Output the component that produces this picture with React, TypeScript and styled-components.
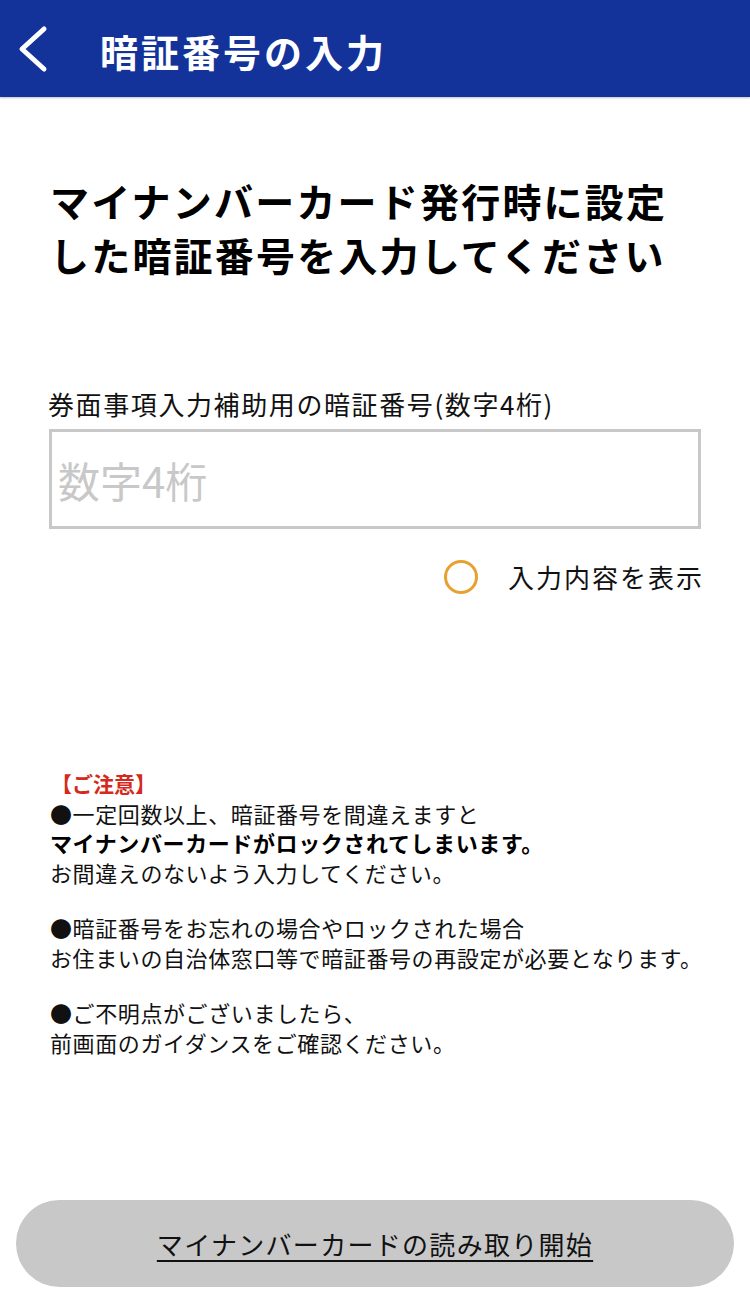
import * as React from 'react';
import styled, { createGlobalStyle } from 'styled-components';

const GlobalStyle = createGlobalStyle`
  html, body {
    margin: 0;
    padding: 0;
    background: #fff;
  }
  body {
    font-family: "Noto Sans CJK JP", "Noto Sans", sans-serif;
    color: #111;
  }
`;

const Screen = styled.div`
  width: 750px;
  min-height: 1303px;
  display: flex;
  flex-direction: column;
`;

const Header = styled.header`
  height: 97px;
  background: #13339a;
  display: flex;
  align-items: center;
  box-shadow: 0 1px 2px rgba(0, 0, 0, 0.25);
`;

const BackButton = styled.button`
  width: 70px;
  height: 97px;
  padding: 0 0 0 16px;
  border: none;
  background: none;
  display: flex;
  align-items: center;
`;

const Title = styled.h1`
  margin: 4px 0 0 30px;
  font-size: 38px;
  font-weight: 700;
  letter-spacing: 3px;
  color: #fff;
`;

const Body = styled.main`
  flex: 1;
  padding: 0 40px 0 50px;
  display: flex;
  flex-direction: column;
`;

const Heading = styled.h2`
  margin: 76px 0 0;
  font-size: 39px;
  font-weight: 700;
  line-height: 54px;
  letter-spacing: 2.2px;
  color: #000;
`;

const FieldLabel = styled.label`
  display: block;
  margin-top: 106px;
  font-size: 26px;
  line-height: 34px;
  letter-spacing: 1.6px;
  color: #111;
  margin-left: -2px;
`;

const PinInput = styled.input`
  box-sizing: border-box;
  width: 652px;
  height: 100px;
  margin: 8px 0 0 -1px;
  padding: 0 6px;
  border: 3px solid #c8c8c8;
  font-family: inherit;
  font-size: 42px;
  color: #111;
  outline: none;
  &::placeholder {
    color: #c8c8c8;
  }
`;

const ToggleRow = styled.div`
  display: flex;
  justify-content: flex-end;
  align-items: center;
  gap: 30px;
  width: 652px;
  margin-top: 29px;
`;

const Radio = styled.span`
  box-sizing: border-box;
  width: 34px;
  height: 34px;
  border: 3.5px solid #e8a030;
  border-radius: 50%;
`;

const ToggleLabel = styled.span`
  font-size: 26px;
  letter-spacing: 2px;
  margin-right: -2px;
  color: #111;
`;

const Notice = styled.section`
  margin-top: 174px;
  font-size: 22px;
  line-height: 29.5px;
  letter-spacing: 0.6px;
  white-space: nowrap;
  color: #111;
`;

const NoticeTitle = styled.div`
  color: #d42a1e;
  font-weight: 700;
  font-size: 21px;
  letter-spacing: 0;
  margin-left: 1px;
`;

const Strong = styled.div`
  font-weight: 700;
  color: #000;
`;

const Spacer = styled.div`
  height: 26px;
`;

const Footer = styled.footer`
  padding: 0 16px 16px;
  margin-top: auto;
`;

const StartButton = styled.button`
  width: 100%;
  height: 87px;
  border: none;
  border-radius: 44px;
  background: #c8c8c8;
  font-family: inherit;
  font-size: 26px;
  letter-spacing: 1.3px;
  color: #111;
  text-decoration: underline;
  text-underline-offset: 5px;
  text-decoration-thickness: 2px;
`;

const BackIcon = () => (
  <svg width="36" height="50" viewBox="0 0 36 50">
    <path
      d="M28 5 L6 25 L28 45"
      fill="none"
      stroke="#fff"
      strokeWidth="5"
      strokeLinecap="round"
      strokeLinejoin="round"
    />
  </svg>
);

const App: React.FC = () => {
  return (
    <Screen>
      <GlobalStyle />
      <Header>
        <BackButton aria-label="戻る">
          <BackIcon />
        </BackButton>
        <Title>暗証番号の入力</Title>
      </Header>
      <Body>
        <Heading>
          マイナンバーカード発行時に設定
          <br />
          した暗証番号を入力してください
        </Heading>
        <FieldLabel htmlFor="pin">券面事項入力補助用の暗証番号(数字4桁)</FieldLabel>
        <PinInput id="pin" type="password" inputMode="numeric" placeholder="数字4桁" />
        <ToggleRow>
          <Radio />
          <ToggleLabel>入力内容を表示</ToggleLabel>
        </ToggleRow>
        <Notice>
          <NoticeTitle>【ご注意】</NoticeTitle>
          <div>●一定回数以上、暗証番号を間違えますと</div>
          <Strong>マイナンバーカードがロックされてしまいます。</Strong>
          <div>お間違えのないよう入力してください。</div>
          <Spacer />
          <div>●暗証番号をお忘れの場合やロックされた場合</div>
          <div>お住まいの自治体窓口等で暗証番号の再設定が必要となります。</div>
          <Spacer />
          <div>●ご不明点がございましたら、</div>
          <div>前画面のガイダンスをご確認ください。</div>
        </Notice>
      </Body>
      <Footer>
        <StartButton>マイナンバーカードの読み取り開始</StartButton>
      </Footer>
    </Screen>
  );
};

export default App;
